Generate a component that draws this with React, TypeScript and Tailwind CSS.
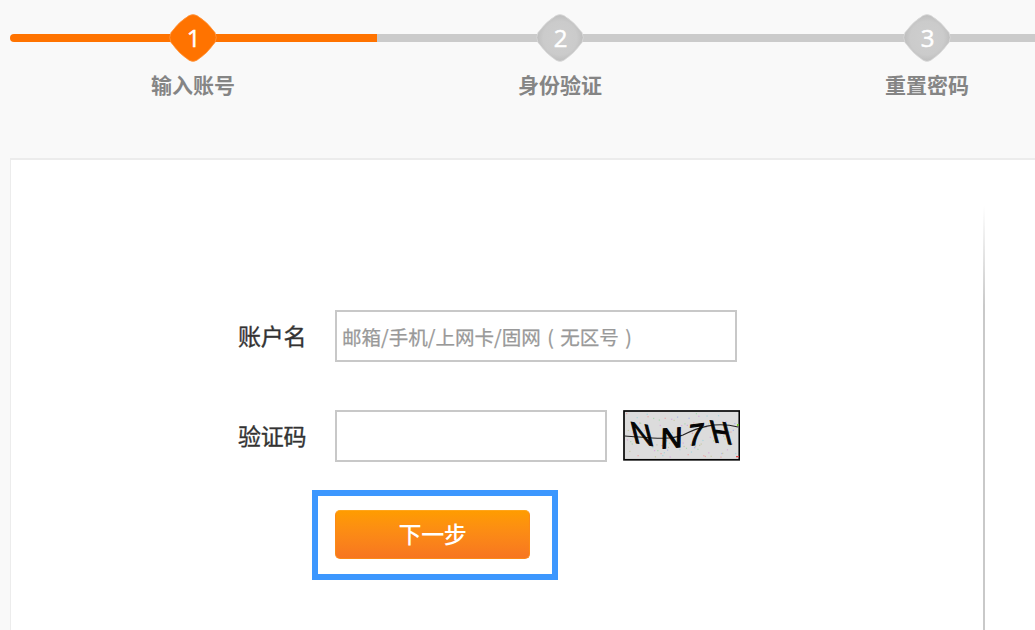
import React from "react";

const steps = [
  { n: "1", label: "输入账号", active: true },
  { n: "2", label: "身份验证", active: false },
  { n: "3", label: "重置密码", active: false },
];

const specks = Array.from({ length: 100 }, (_, i) => ({
  x: 3 + ((i * 61.803 + (i % 7) * 13.7) % 110),
  y: 3 + ((i * i * 3.17 + i * 11.9) % 44),
  c: ["#e9a9a9", "#a9d8b0", "#aab4e6", "#d9a9dc", "#a8d5dc", "#c9c9a4"][i % 6],
}));

function Step({ n, label, active }: { n: string; label: string; active: boolean }) {
  return (
    <li className="flex w-[367px] shrink-0 flex-col items-center">
      <div className="grid w-full grid-cols-1 place-items-center">
        <div
          className={
            active
              ? "col-start-1 row-start-1 h-2 w-full rounded-l-full bg-[#ff7300]"
              : "col-start-1 row-start-1 h-2 w-full bg-[#cbcbcb]"
          }
        />
        <svg className="col-start-1 row-start-1 mr-[2px]" width="48" height="48" viewBox="0 0 48 48">
          <defs>
            <radialGradient id={"node" + n}>
              <stop offset="0" stopColor={active ? "#ff7300" : "#cecece"} />
              <stop offset="0.72" stopColor={active ? "#ff7300" : "#cbcbcb"} />
              <stop offset="1" stopColor={active ? "#ff7300" : "#bebebe"} />
            </radialGradient>
          </defs>
          <path
            d="M20 1.6Q24 -0.4 28 1.6Q38 7.5 46 18.5Q48.6 23.5 46 28.5Q38 40 28 46.2Q24 48.6 20 46.2Q10 40 2 28.5Q-0.6 23.5 2 18.5Q10 7.5 20 1.6Z"
            fill={"url(#node" + n + ")"}
            stroke={active ? "#ff9b48" : "#dedede"}
            strokeWidth="0.7"
          />
        </svg>
        <span className="col-start-1 row-start-1 font-['Open_Sans','Noto_Sans',sans-serif] text-2xl leading-6 text-white [-webkit-text-stroke:0.5px_white]">
          {n}
        </span>
      </div>
      <span className="mt-[10px] mr-px text-[21px] leading-6 font-bold text-[#858585]">{label}</span>
    </li>
  );
}

function Captcha() {
  return (
    <svg className="mb-[2px] ml-4 h-[51px] w-[117px] shrink-0" viewBox="0 0 117 51">
      <rect x="1" y="1" width="115.3" height="48.8" fill="#dcdcdc" stroke="#050505" strokeWidth="1.7" />
      {specks.map((s, i) => (
        <rect key={i} x={s.x} y={s.y} width="1.2" height="1.2" fill={s.c} />
      ))}
      <path d="M2 26C22 27 45 31 60 25C74 18 92 11 115 17" fill="none" stroke="#222" strokeWidth="1.1" />
      <g fill="#050505" stroke="#050505" strokeWidth="1" fontFamily="Liberation Sans, sans-serif" fontSize="27">
        <text transform="matrix(1.08 .2 .28 1.12 11 32.5)">N</text>
        <text transform="matrix(1.12 -.08 -.02 1.05 37.5 38.5)">N</text>
        <text transform="matrix(1.05 -.14 -.12 1.12 64 36)">7</text>
        <text transform="matrix(1.02 .14 .3 1.17 90.5 32)">H</text>
      </g>
      <rect x="113" y="46" width="3" height="1.3" fill="#d84a4a" />
      <rect x="114" y="14" width="1.5" height="2" fill="#7bd329" />
    </svg>
  );
}

export default function App() {
  return (
    <div className="flex h-[630px] w-[1035px] flex-col overflow-hidden bg-[#f9f9f9] pl-[10px] font-['Noto_Sans_CJK_SC',sans-serif]">
      <ol className="flex h-[158px] shrink-0 pt-[14px]">
        {steps.map((s) => (
          <Step key={s.n} n={s.n} label={s.label} active={s.active} />
        ))}
      </ol>
      <main className="flex flex-1 border-t-2 border-l-[1.5px] border-[#ececec] bg-white">
        <form className="flex w-[972px] shrink-0 flex-col pt-[150px] pl-[227px]" onSubmit={(e) => e.preventDefault()}>
          <div className="flex h-[52px] items-center">
            <label className="mb-[3px] w-[97px] shrink-0 text-[23px] leading-8 tracking-[-0.3px] text-[#333] [-webkit-text-stroke:0.35px_#333]">
              账户名
            </label>
            <div className="flex h-[52px] w-[402px] items-center border-2 border-[#c8c8c8] pt-0.5 pl-[5px] text-[19.55px] leading-7 whitespace-nowrap text-[#999] [-webkit-text-stroke:0.25px_#999]">
              <span>邮箱/手机/上网卡/固网</span>
              <span className="w-[19.5px] text-center">(</span>
              <span>无区号</span>
              <span className="w-[19.5px] text-center">)</span>
            </div>
          </div>
          <div className="mt-12 flex h-[52px] items-center">
            <label className="mb-[3px] w-[97px] shrink-0 text-[23px] leading-8 tracking-[-0.3px] text-[#333] [-webkit-text-stroke:0.35px_#333]">
              验证码
            </label>
            <input className="h-[52px] w-[272px] border-2 border-[#c8c8c8] bg-white px-[5px] text-[19.5px] outline-none" />
            <Captcha />
          </div>
          <div className="mt-7 ml-[74px] flex h-[90px] w-[246px] border-6 border-[#3c97fe] pt-[14px] pl-[17px]">
            <button className="h-[49px] w-[195px] rounded-[5px] border border-[#fb8a16] border-t-[#ffa51c] bg-linear-to-b from-[#ff9c00] to-[#f77620] pb-[3px] text-[23px] leading-8 font-medium tracking-[-0.3px] text-white">
              下一步
            </button>
          </div>
        </form>
        <div className="mt-[46px] w-0.5 shrink-0 bg-linear-to-b from-white to-[#c9c9c9] to-[100px]" />
      </main>
    </div>
  );
}
